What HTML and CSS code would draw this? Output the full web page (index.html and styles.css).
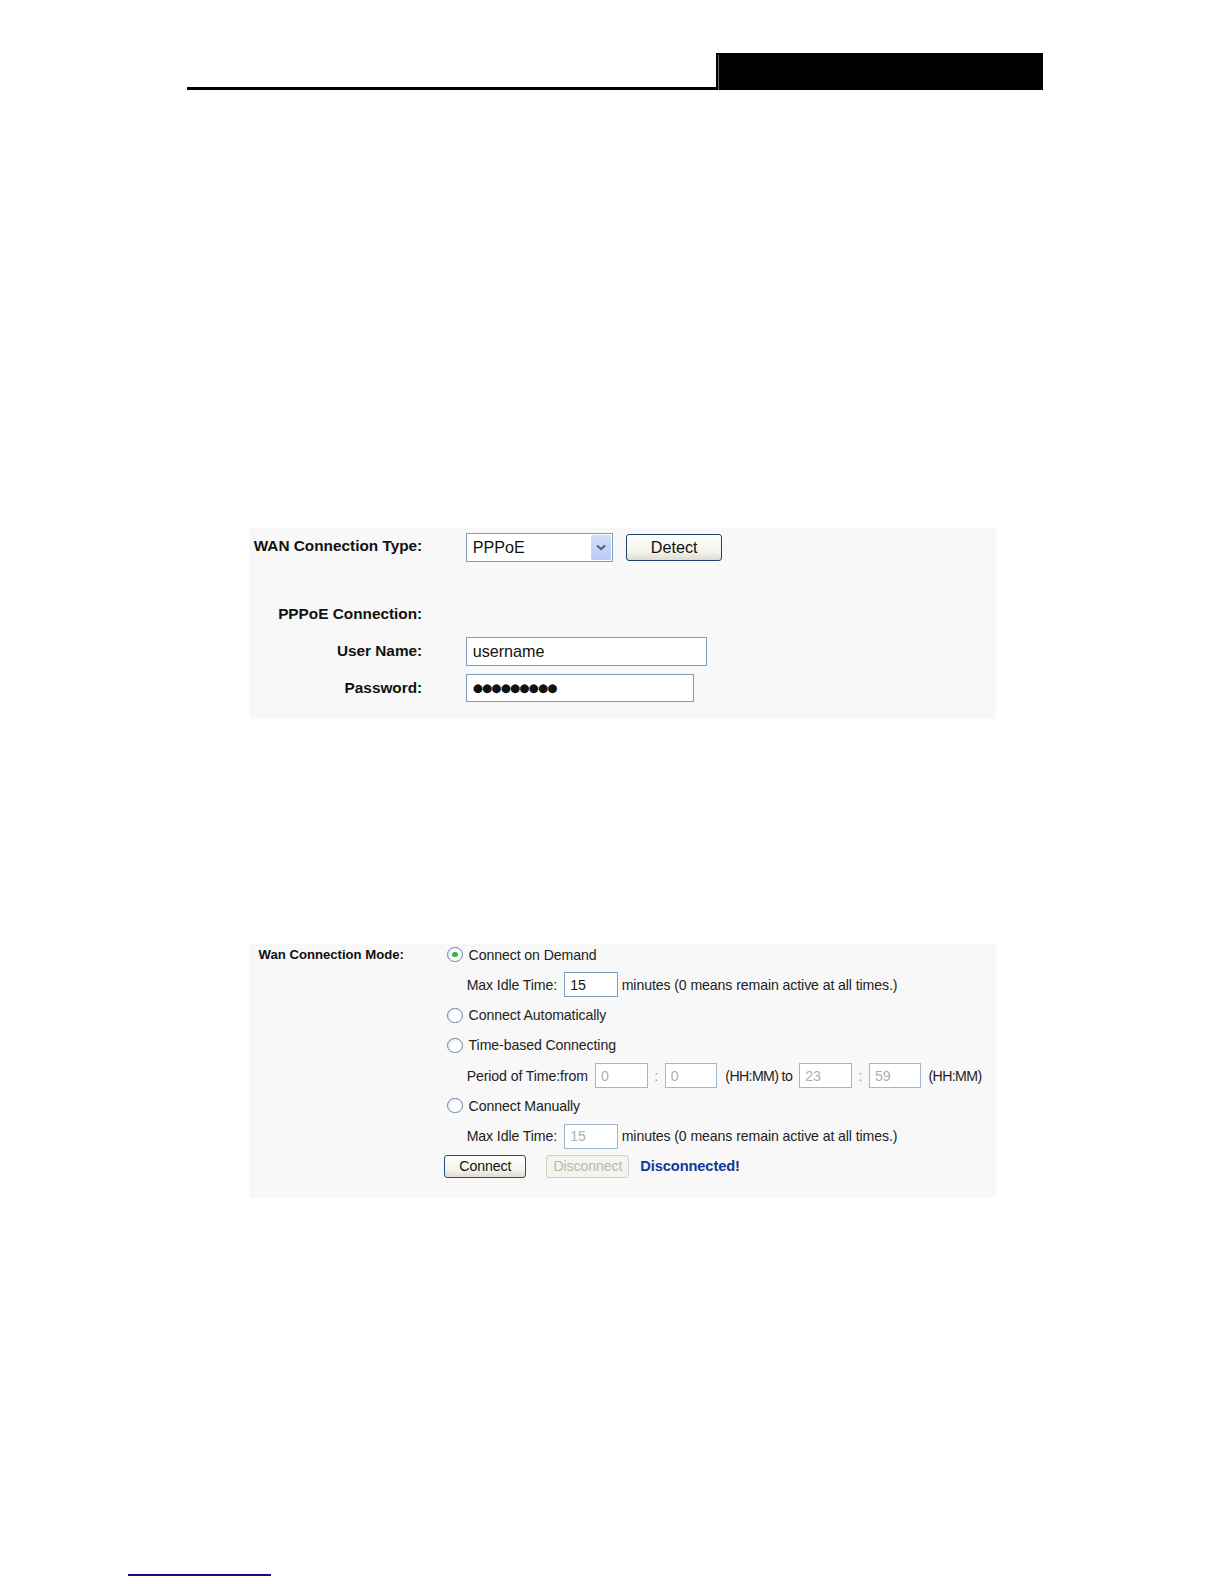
FILE: index.html
```html
<!DOCTYPE html>
<html>
<head>
<meta charset="utf-8">
<link rel="stylesheet" href="styles.css">
</head>
<body>
<div class="page">
  <header class="header">
    <div class="rule"></div>
    <div class="blackbox"></div>
  </header>

  <section class="panel panel-type">
    <div class="row r1">
      <div class="lbl">WAN Connection Type:</div>
      <div class="ctl">
        <div class="select"><span class="sel-text">PPPoE</span><span class="sel-btn"><svg width="10" height="7" viewBox="0 0 10 7"><path d="M1 1.5 L5 5 L9 1.5" fill="none" stroke="#4d6185" stroke-width="2"/></svg></span></div>
        <div class="btn btn-detect">Detect</div>
      </div>
    </div>
    <div class="row r2">
      <div class="lbl">PPPoE Connection:</div>
    </div>
    <div class="row r3">
      <div class="lbl">User Name:</div>
      <div class="ctl"><div class="field f-user">username</div></div>
    </div>
    <div class="row r4">
      <div class="lbl">Password:</div>
      <div class="ctl"><div class="field f-pass"><span class="dots">●●●●●●●●●</span></div></div>
    </div>
  </section>

  <section class="panel panel-mode">
    <div class="mode-lbl">Wan Connection Mode:</div>
    <div class="mode-opts">
      <div class="mrow"><span class="radio checked"></span>Connect on Demand</div>
      <div class="mrow sub">Max Idle Time:<span class="box b-idle">15</span>minutes (0 means remain active at all times.)</div>
      <div class="mrow"><span class="radio"></span>Connect Automatically</div>
      <div class="mrow"><span class="radio"></span>Time-based Connecting</div>
      <div class="mrow sub">Period of Time:from<span class="box dis b-t1">0</span><span class="colon">:</span><span class="box dis b-t2">0</span><span class="hh">(HH:MM) to</span><span class="box dis b-t3">23</span><span class="colon">:</span><span class="box dis b-t4">59</span><span class="hh2">(HH:MM)</span></div>
      <div class="mrow"><span class="radio"></span>Connect Manually</div>
      <div class="mrow sub">Max Idle Time:<span class="box dis b-idle">15</span>minutes (0 means remain active at all times.)</div>
      <div class="mrow btns"><span class="btn btn-connect">Connect</span><span class="btn btn-dis">Disconnect</span><span class="status">Disconnected!</span></div>
    </div>
  </section>

  <footer class="footer"><div class="fline"></div></footer>
</div>
</body>
</html>
```

FILE: styles.css
```css
html, body {
  margin: 0;
  padding: 0;
  background: #ffffff;
}
body {
  font-family: "Liberation Sans", Arial, sans-serif;
  color: #000;
  overflow: hidden;
}
.page {
  display: flow-root;
  zoom: 1.0101;
}
.header {
  display: flex;
  margin-left: 185px;
  width: 848px;
  padding-top: 52px;
}
.rule {
  flex: 1;
  height: 37px;
  box-sizing: border-box;
  border-bottom: 3px solid #000;
}
.blackbox {
  width: 324px;
  height: 37px;
  background: #000;
  box-sizing: border-box;
  box-shadow: inset 2px 2px 0 #000, inset 3px 2px 0 #6e6e6e;
}

.panel {
  background: #f8f8f8;
  margin-left: 247px;
  width: 739px;
  box-sizing: border-box;
}
.panel-type {
  margin-top: 434px;
  height: 189px;
  padding-top: 5px;
}
.row {
  display: flex;
  align-items: center;
  height: 28px;
}
.r2 { margin-top: 38px; }
.r3 { margin-top: 9px; }
.r4 { margin-top: 8px; }
.lbl {
  width: 171px;
  text-align: right;
  font-weight: bold;
  font-size: 15.2px;
  color: #111;
}
.r1 .lbl { margin-top: -3px; }
.ctl {
  margin-left: 43px;
  display: flex;
  align-items: center;
}
.select {
  width: 146px;
  height: 28px;
  box-sizing: border-box;
  border: 1px solid #7f9db9;
  background: #fff;
  display: flex;
  align-items: center;
  justify-content: space-between;
  padding: 1px;
}
.sel-text {
  font-size: 16px;
  padding-left: 5px;
  color: #111;
}
.sel-btn {
  width: 20px;
  height: 24px;
  background: linear-gradient(#d4e0fb, #b7cbf5);
  border-radius: 2px;
  display: flex;
  align-items: center;
  justify-content: center;
}
.btn {
  display: inline-flex;
  align-items: center;
  justify-content: center;
  box-sizing: border-box;
  border: 1px solid #1c3f6e;
  border-radius: 3px;
  background: linear-gradient(#ffffff, #f2f1ea 70%, #dedbcf);
  color: #111;
}
.btn-detect {
  margin-left: 13px;
  width: 95px;
  height: 26px;
  font-size: 16px;
}
.field {
  height: 28px;
  box-sizing: border-box;
  border: 1px solid #7f9db9;
  background: #fff;
  display: flex;
  align-items: center;
  padding-left: 6px;
  font-size: 16px;
  color: #111;
}
.f-user { width: 239px; }
.f-pass { width: 226px; }
.dots {
  font-family: "DejaVu Sans", sans-serif;
  font-size: 11.5px;
  letter-spacing: -0.8px;
}

.panel-mode {
  margin-top: 223px;
  height: 251px;
  display: flex;
}
.mode-lbl {
  width: 184px;
  padding-left: 9px;
  font-weight: bold;
  font-size: 13px;
  line-height: 20px;
  margin-top: 1px;
  color: #111;
}
.mode-opts {
  display: flex;
  flex-direction: column;
  gap: 10px;
}
.mrow {
  height: 20px;
  display: flex;
  align-items: center;
  font-size: 14px;
  color: #222;
  letter-spacing: -0.1px;
  white-space: nowrap;
}
.mrow.sub { padding-left: 22px; }
.radio {
  width: 13px;
  height: 13px;
  margin-left: 3px;
  margin-right: 6px;
  border: 1px solid #6b84a6;
  border-radius: 50%;
  background: radial-gradient(circle at 60% 60%, #ffffff 40%, #dcdfe6);
  position: relative;
  flex: none;
}
.radio.checked::after {
  content: "";
  position: absolute;
  left: 4px;
  top: 4px;
  width: 5px;
  height: 5px;
  border-radius: 50%;
  background: #3fae49;
}
.box {
  display: inline-flex;
  align-items: center;
  box-sizing: border-box;
  height: 25px;
  border: 1px solid #7f9db9;
  background: #fff;
  padding-left: 5px;
  font-size: 14px;
  color: #111;
}
.box.dis {
  color: #b0b0b0;
  border-color: #a4b6cc;
}
.b-idle { width: 53px; margin-left: 7px; margin-right: 4px; }
.b-t1 { width: 52px; margin-left: 7px; }
.b-t2 { width: 52px; }
.b-t3 { width: 52px; }
.b-t4 { width: 52px; }
.colon { width: 17px; text-align: center; color: #999; }
.hh { margin-left: 8px; margin-right: 7px; letter-spacing: -0.6px; }
.hh2 { margin-left: 7px; letter-spacing: -0.6px; }
.btn-connect {
  width: 81px;
  height: 23px;
  font-size: 14px;
  border-color: #1f4e8c;
}
.btn-dis {
  margin-left: 20px;
  width: 82px;
  height: 23px;
  font-size: 14px;
  color: #b8b8b0;
  border-color: #d2d0c5;
  background: #f4f3ee;
}
.status {
  margin-left: 11px;
  font-weight: bold;
  font-size: 14.5px;
  color: #10389a;
}

.footer {
  margin-top: 372px;
  margin-left: 127px;
}
.fline {
  width: 141px;
  height: 2px;
  background: #101080;
}
```
